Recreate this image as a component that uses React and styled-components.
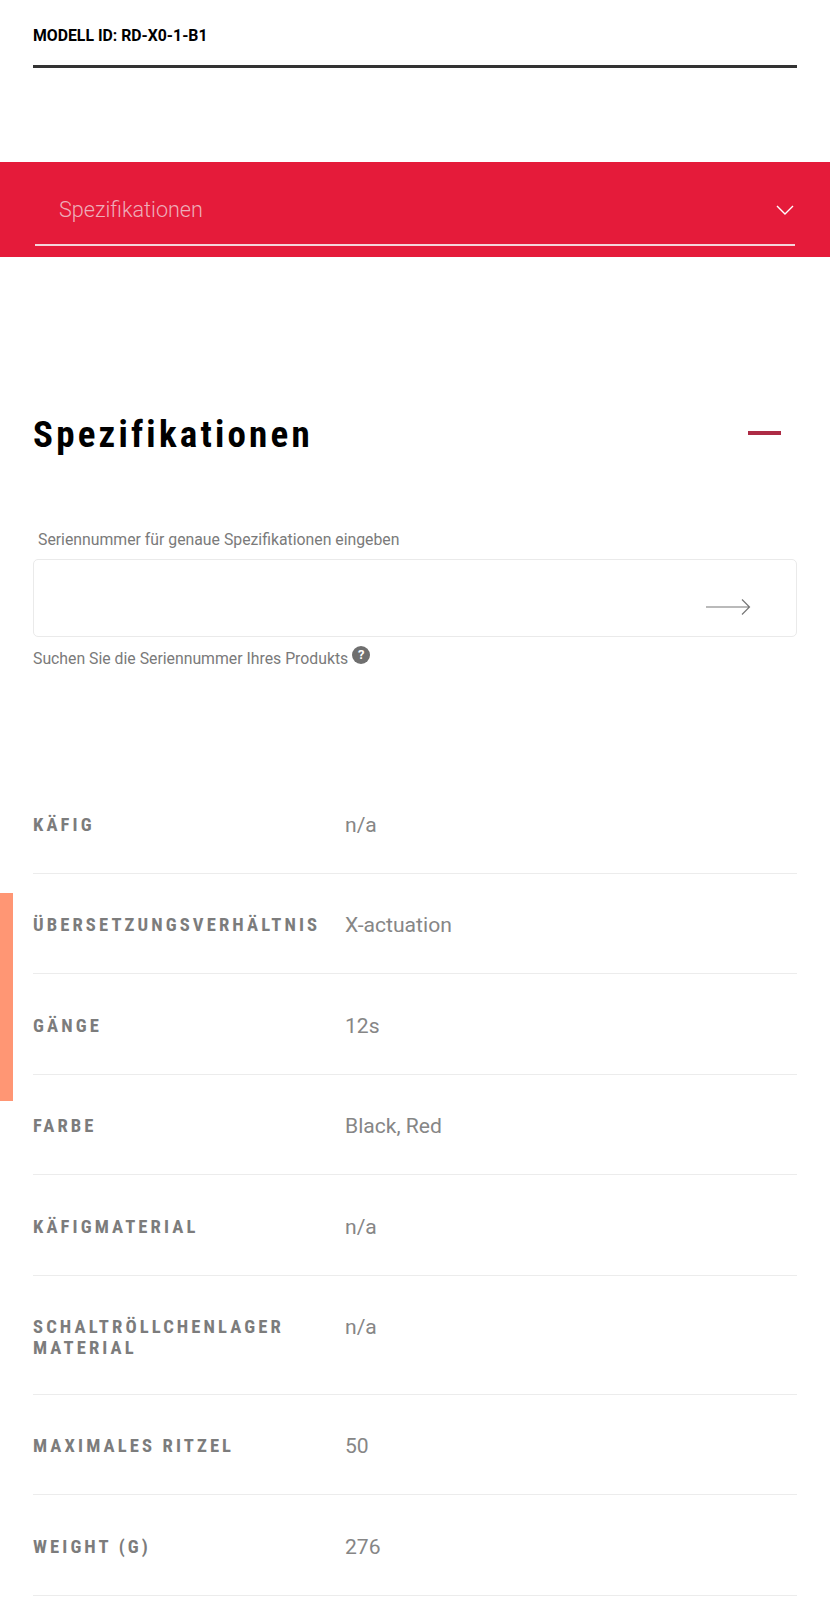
import styled, { createGlobalStyle } from "styled-components";

const specs = [
  { label: "Käfig", value: "n/a" },
  { label: "Übersetzungsverhältnis", value: "X-actuation" },
  { label: "Gänge", value: "12s" },
  { label: "Farbe", value: "Black, Red" },
  { label: "Käfigmaterial", value: "n/a" },
  { label: "Schaltröllchenlager Material", value: "n/a" },
  { label: "Maximales Ritzel", value: "50" },
  { label: "Weight (g)", value: "276" },
];

function App() {
  return (
    <Page>
      <GlobalStyle />
      <SideTab />
      <ModelBar>
        <ModelId>MODELL ID: RD-X0-1-B1</ModelId>
      </ModelBar>

      <RedBand>
        <DropDown>
          <DropLabel>Spezifikationen</DropLabel>
          <Chevron width="20" height="12" viewBox="0 0 20 12" fill="none">
            <path d="M2 2l8 8 8-8" stroke="#fff" strokeWidth="1.4" />
          </Chevron>
        </DropDown>
      </RedBand>

      <Section>
        <HeadRow>
          <Heading>Spezifikationen</Heading>
          <Minus />
        </HeadRow>

        <SerialLabel>Seriennummer für genaue Spezifikationen eingeben</SerialLabel>
        <SerialBox>
          <svg width="46" height="18" viewBox="0 0 46 18" fill="none">
            <path d="M1 9h43M37 1.5L44.5 9 37 16.5" stroke="#777" strokeWidth="1.2" />
          </svg>
        </SerialBox>
        <Hint>
          Suchen Sie die Seriennummer Ihres Produkts
          <HelpDot>?</HelpDot>
        </Hint>
      </Section>

      <SpecList>
        {specs.map((s) => (
          <SpecRow key={s.label}>
            <SpecLabel>{s.label}</SpecLabel>
            <SpecValue>{s.value}</SpecValue>
          </SpecRow>
        ))}
      </SpecList>
    </Page>
  );
}

export default App;

const GlobalStyle = createGlobalStyle`
  body {
    margin: 0;
    background: #fff;
    font-family: Roboto, "Liberation Sans", sans-serif;
  }
`;

const Page = styled.div`
  position: relative;
  width: 830px;
  overflow: hidden;
`;

const SideTab = styled.div`
  position: absolute;
  left: 0;
  top: 893px;
  width: 13px;
  height: 208px;
  background: #ff9674;
`;

const ModelBar = styled.div`
  margin: 0 33px;
  height: 68px;
  border-bottom: 3px solid #333;
  box-sizing: border-box;
  padding-top: 26px;
`;

const ModelId = styled.div`
  font-size: 15.8px;
  line-height: 19px;
  font-weight: 700;
  color: #000;
`;

const RedBand = styled.div`
  margin-top: 94px;
  height: 95px;
  background: #e51b3a;
  padding: 0 35px;
  box-sizing: border-box;
`;

const DropDown = styled.div`
  height: 84px;
  border-bottom: 2px solid #f4d5da;
  box-sizing: border-box;
  display: flex;
  align-items: center;
  justify-content: space-between;
  padding: 12px 0 0 24px;
`;

const DropLabel = styled.div`
  font-size: 21.6px;
  font-weight: 300;
  color: #eeadb9;
`;

const Chevron = styled.svg`
  margin-top: 1px;
`;

const Section = styled.div`
  padding: 0 33px;
`;

const HeadRow = styled.div`
  margin-top: 155px;
  display: flex;
  align-items: center;
  justify-content: space-between;
  padding-right: 16px;
`;

const Heading = styled.h2`
  margin: 0;
  font-size: 37px;
  line-height: 46px;
  font-weight: 700;
  font-stretch: 75%;
  font-family: "Roboto Condensed", "Liberation Sans Narrow", Roboto, sans-serif;
  letter-spacing: 3.2px;
  color: #000;
`;

const Minus = styled.div`
  width: 33px;
  height: 4px;
  background: #ad2b45;
  margin-bottom: 5px;
`;

const SerialLabel = styled.div`
  margin-top: 72px;
  padding-left: 5px;
  font-size: 15.8px;
  line-height: 20px;
  font-weight: 400;
  color: #7a7a7a;
`;

const SerialBox = styled.div`
  margin-top: 9px;
  height: 78px;
  border: 1px solid #eaeaea;
  border-radius: 5px;
  box-sizing: border-box;
  display: flex;
  align-items: flex-end;
  justify-content: flex-end;
  padding: 0 45px 20px 0;
`;

const Hint = styled.div`
  margin-top: 12px;
  font-size: 15.8px;
  line-height: 20px;
  color: #7a7a7a;
  display: flex;
  align-items: flex-start;
`;

const HelpDot = styled.span`
  width: 18px;
  height: 18px;
  border-radius: 50%;
  background: #6f6f6f;
  color: #fff;
  font-size: 13px;
  line-height: 18px;
  font-weight: 700;
  text-align: center;
  margin: -3px 0 0 4px;
`;

const SpecList = styled.div`
  margin: 104.6px 33px 0;
`;

const SpecRow = styled.div`
  display: grid;
  grid-template-columns: 312px 1fr;
  padding: 41.4px 0 38px;
  border-bottom: 1px solid #ececec;
  align-items: start;
`;

const SpecLabel = styled.div`
  width: 270px;
  margin-bottom: -2.5px;
  font-size: 18.6px;
  line-height: 20.7px;
  font-weight: 700;
  font-stretch: 75%;
  font-family: "Roboto Condensed", "Liberation Sans Narrow", Roboto, sans-serif;
  letter-spacing: 3.1px;
  text-transform: uppercase;
  color: #7c7c7c;
`;

const SpecValue = styled.div`
  font-size: 21.1px;
  line-height: 20px;
  font-weight: 400;
  color: #868686;
`;
